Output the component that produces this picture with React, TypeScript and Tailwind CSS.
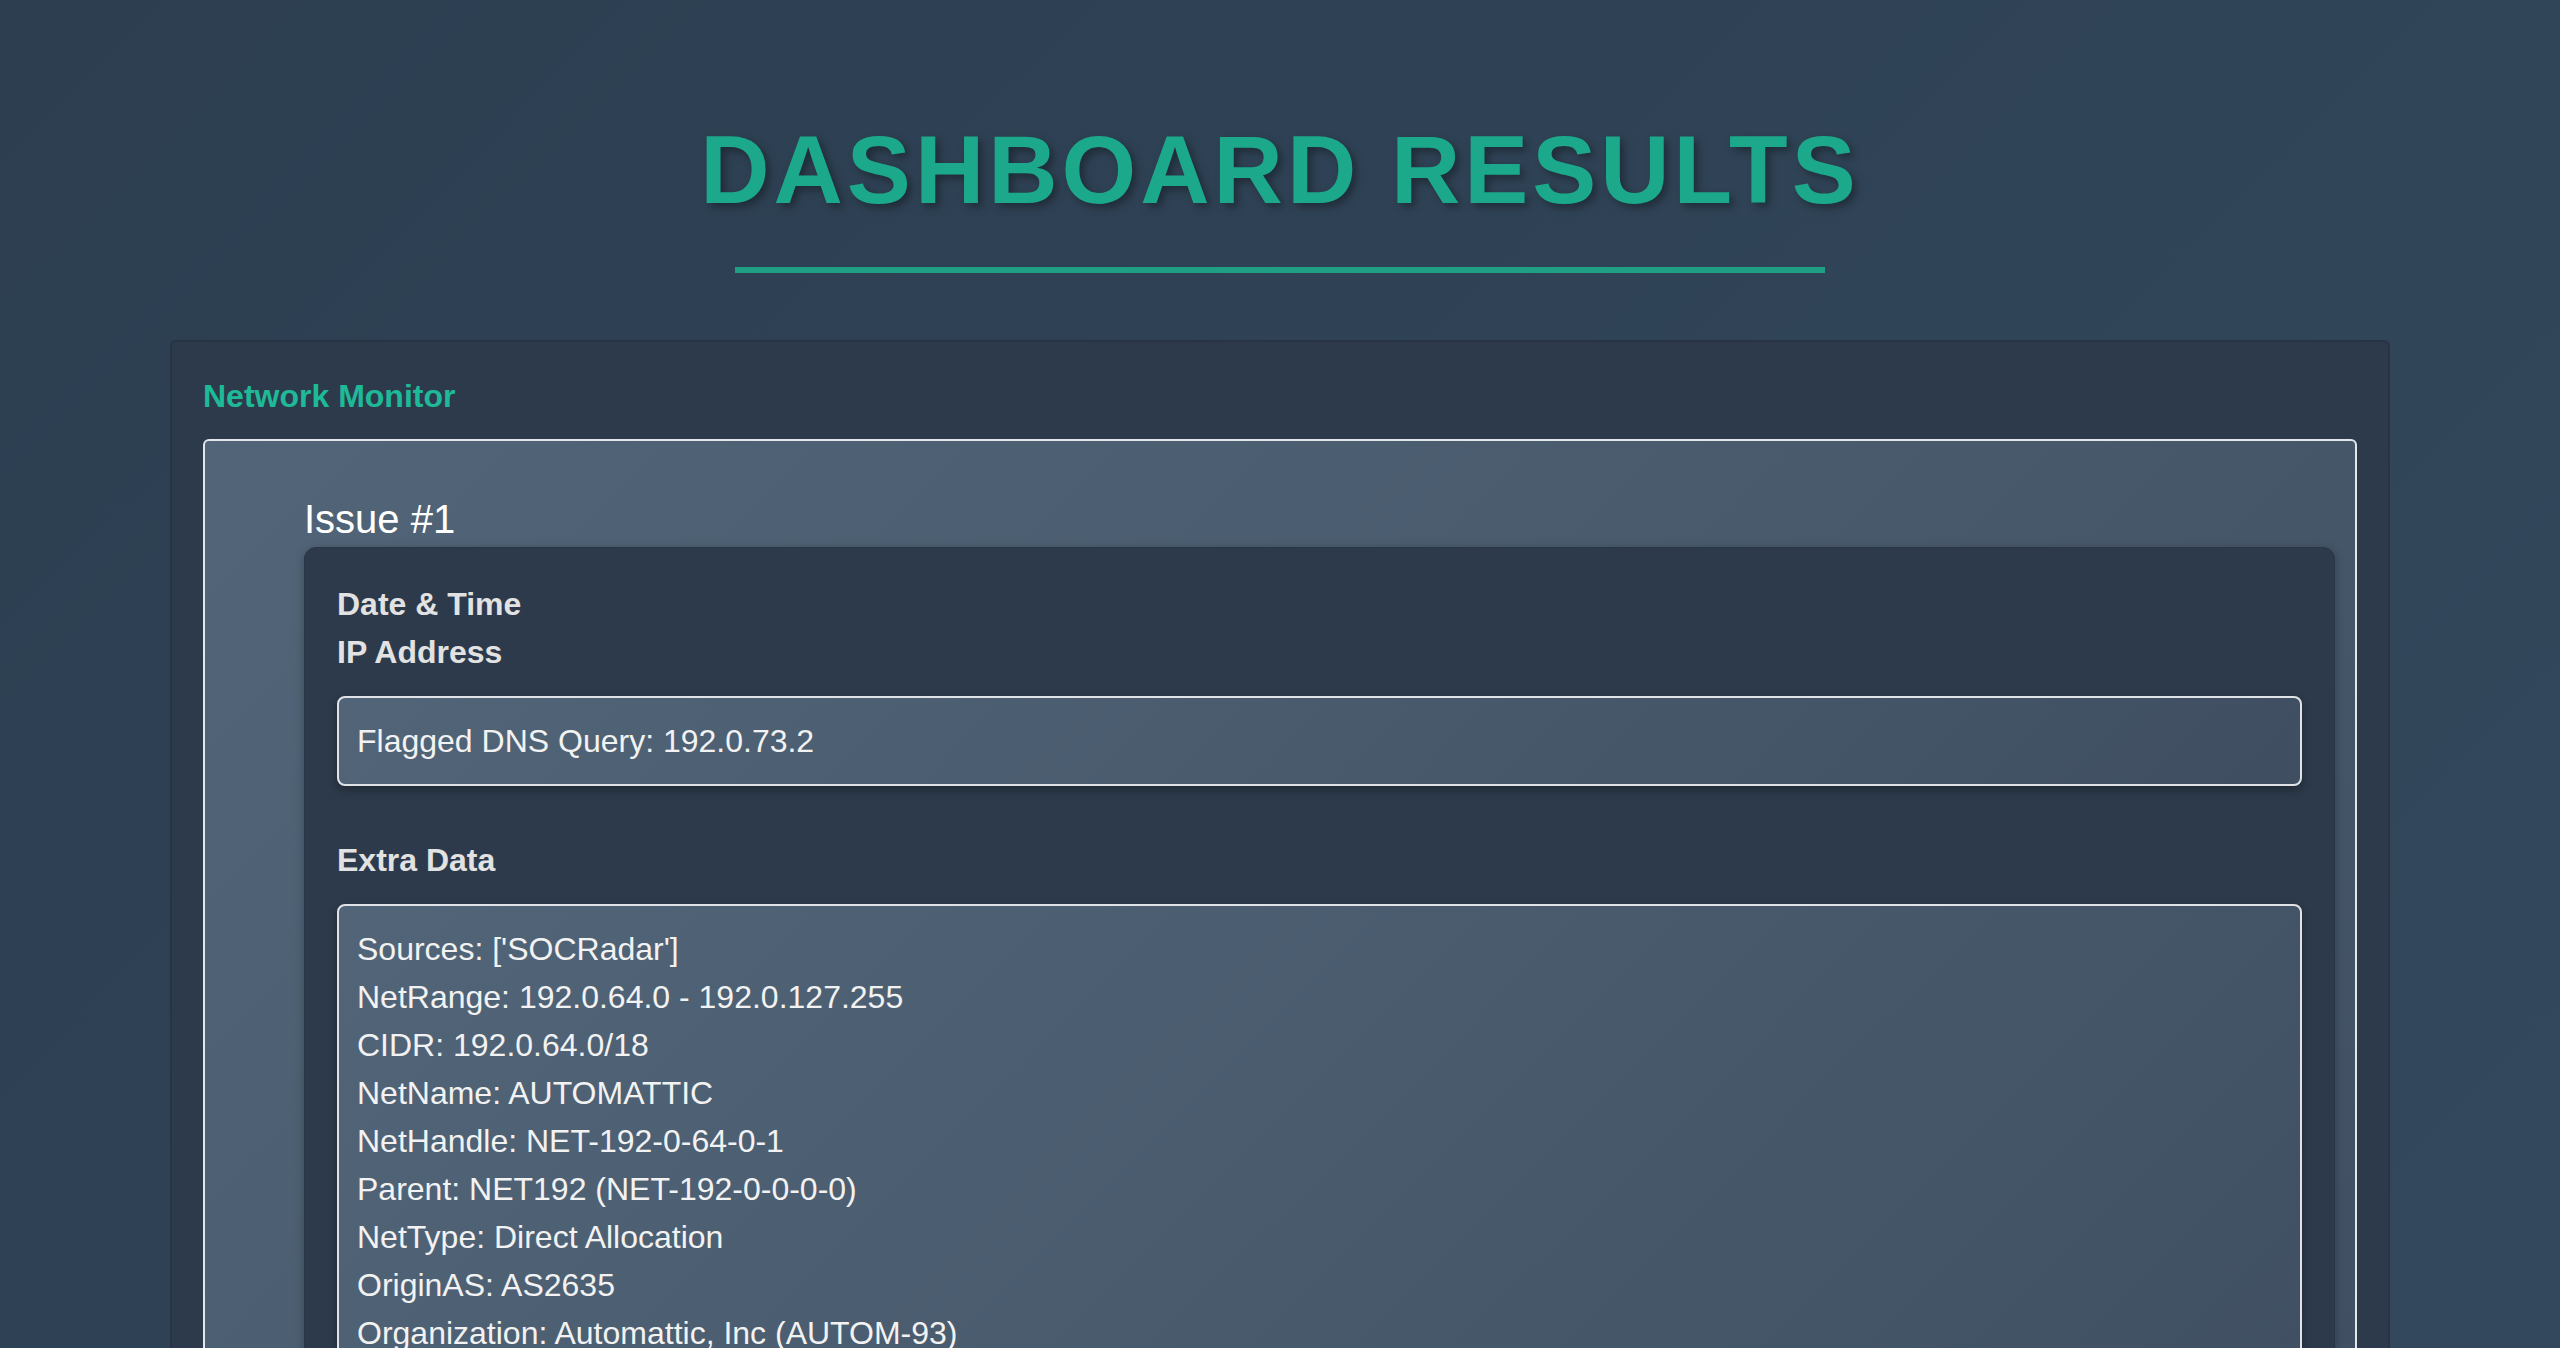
import React from "react";

const extraLines = [
  "Sources: ['SOCRadar']",
  "NetRange: 192.0.64.0 - 192.0.127.255",
  "CIDR: 192.0.64.0/18",
  "NetName: AUTOMATTIC",
  "NetHandle: NET-192-0-64-0-1",
  "Parent: NET192 (NET-192-0-0-0-0)",
  "NetType: Direct Allocation",
  "OriginAS: AS2635",
  "Organization: Automattic, Inc (AUTOM-93)",
  "RegDate: 2012-11-20",
  "Updated: 2012-11-20",
  "Ref: https://rdap.arin.net/registry/ip/192.0.64.0",
];

export default function App() {
  return (
    <div className="min-h-screen bg-[linear-gradient(135deg,#2c3e50_0%,#34495e_100%)] font-['Liberation_Sans',Arial,sans-serif] pb-[80px]">
      <header className="flex flex-col items-center pt-[115px]">
        <h1 className="text-[96px] leading-[110px] font-bold tracking-[4px] text-[#1ca88a] [text-shadow:4px_4px_8px_rgba(0,0,0,0.35)]">
          DASHBOARD RESULTS
        </h1>
        <div className="mt-[42px] h-[6px] w-[1090px] bg-[#1fa085]" />
      </header>

      <section className="mx-auto mt-[67px] w-[2220px] rounded-[6px] border-2 border-[#283444] bg-[#2d3a4b] px-[31px] pt-[34px] pb-[40px]">
        <h2 className="text-[32px] leading-[40px] font-bold text-[#1eba98]">
          Network Monitor
        </h2>

        <div className="mt-[23px] rounded-[6px] border-2 border-[#e3e7eb] bg-[linear-gradient(135deg,#526578_0%,#3f4f61_100%)] pt-[55px] pb-[20px] pl-[99px] pr-[20px]">
          <h3 className="text-[40px] leading-[46px] font-normal text-white">
            Issue #1
          </h3>

          <div className="mt-[5px] rounded-[12px] border border-[#2a3646] bg-[#2d3a4b] px-[32px] pt-[32px] pb-[32px] shadow-[0_2px_10px_rgba(0,0,0,0.25)]">
            <div className="text-[32px] leading-[48px] font-bold text-[#e2e2e2]">
              Date &amp; Time
            </div>
            <div className="text-[32px] leading-[48px] font-bold text-[#e2e2e2]">
              IP Address
            </div>

            <div className="mt-[20px] rounded-[8px] border-2 border-[#dfe3e8] bg-[linear-gradient(135deg,#526578_0%,#3f4f61_100%)] px-[18px] py-[19px] text-[32px] leading-[48px] text-[#f2f2f2] shadow-[0_4px_10px_rgba(0,0,0,0.3)]">
              Flagged DNS Query: 192.0.73.2
            </div>

            <div className="mt-[50px] text-[32px] leading-[48px] font-bold text-[#e2e2e2]">
              Extra Data
            </div>

            <div className="mt-[20px] rounded-[8px] border-2 border-[#dfe3e8] bg-[linear-gradient(135deg,#526578_0%,#3f4f61_100%)] px-[18px] py-[19px] text-[32px] leading-[48px] text-[#f2f2f2] shadow-[0_4px_10px_rgba(0,0,0,0.3)]">
              {extraLines.map((l) => (
                <div key={l}>{l}</div>
              ))}
            </div>
          </div>
        </div>
      </section>
    </div>
  );
}
